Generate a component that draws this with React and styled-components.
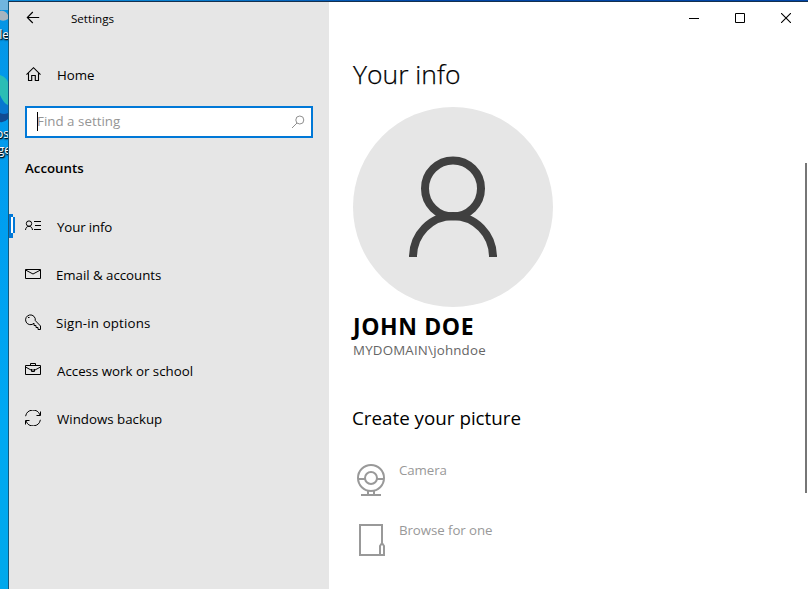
import React from "react";
import styled, { createGlobalStyle } from "styled-components";

const GlobalStyle = createGlobalStyle`
  * { box-sizing: border-box; }
  body { margin: 0; overflow: hidden; background: #fff; }
`;

const Screen = styled.div`
  width: 808px;
  height: 589px;
  display: flex;
  overflow: hidden;
  font-family: "Open Sans", "Noto Sans", sans-serif;
  font-size: 13.3px;
  color: #000;
`;

const Desktop = styled.div`
  width: 8px;
  height: 589px;
  flex: none;
  position: relative;
  overflow: hidden;
  background: linear-gradient(#0793e2 0, #0398ea 60px, #009ff0 230px, #00a8f2 420px, #00a8ec 589px);
`;

const DesktopArt = styled.svg`
  position: absolute;
  inset: 0;
`;

const DesktopLabel = styled.span`
  position: absolute;
  right: ${(p) => p.$right}px;
  top: ${(p) => p.$top}px;
  font-size: 12px;
  line-height: 16px;
  color: #fff;
  text-shadow: 1px 1px 1px #000, 0 1px 2px #000;
`;

const WindowTop = styled.div`
  display: flex;
  flex-direction: column;
  width: 800px;
  background: linear-gradient(90deg, #0a86d4 0, #0a80d0 170px, #0046a8 420px);
`;

const Window = styled.div`
  flex: 1;
  min-width: 0;
  display: flex;
  margin-top: 1px;
  border-left: 1px solid #17587c;
  border-top: 1px solid #14304f;
`;

const Sidebar = styled.aside`
  width: 320px;
  flex: none;
  background: #e6e6e6;
  display: flex;
  flex-direction: column;
`;

const TitleRow = styled.div`
  height: 33px;
  display: flex;
  align-items: center;
  padding-left: 16px;
  gap: 30px;
  font-size: 11.6px;
`;

const Text = styled.span`
  white-space: pre;
  letter-spacing: ${(p) => p.$track || 0}px;
  margin-left: ${(p) => p.$nudge || 0}px;
`;

const HomeRow = styled.div`
  height: 48px;
  margin-top: 16px;
  display: flex;
  align-items: center;
  padding-left: 16px;
  gap: 16px;
`;

const SearchBox = styled.div`
  margin: 7px 0 0 16px;
  width: 288px;
  height: 32px;
  border: 2px solid #0078d7;
  background: #fff;
  display: flex;
  align-items: center;
  color: #959595;
  padding: 0 6px 2px 10px;
`;

const Caret = styled.i`
  width: 1px;
  height: 19px;
  margin-right: -1px;
  background: #000;
`;

const Spacer = styled.div`
  flex: 1;
`;

const SectionTitle = styled.h2`
  margin: 18px 0 0 16px;
  font-size: 13.3px;
  line-height: 24px;
  font-weight: 600;
`;

const Nav = styled.nav`
  margin-top: 23px;
  display: flex;
  flex-direction: column;
`;

const NavItem = styled.div`
  height: 48px;
  position: relative;
  display: flex;
  align-items: center;
  padding-left: 16px;
  gap: 16px;
`;

const ActiveMark = styled.svg`
  position: absolute;
  left: 0;
  top: 11px;
`;

const Icon = styled.svg`
  flex: none;
  display: block;
  fill: none;
  stroke: ${(p) => p.$color || "#000"};
  stroke-width: ${(p) => p.$weight || 1};
  margin-top: ${(p) => p.$lift || 0}px;
`;

const Main = styled.main`
  flex: 1;
  min-width: 0;
  background: #fff;
  display: flex;
  flex-direction: column;
`;

const Controls = styled.div`
  height: 33px;
  display: flex;
  justify-content: flex-end;
  align-items: center;
  gap: 36px;
  padding: 0 17px 1px 0;
`;

const Body = styled.div`
  flex: 1;
  display: flex;
  justify-content: space-between;
  padding-right: 1px;
`;

const Content = styled.div`
  padding-left: 24px;
`;

const PageTitle = styled.h1`
  margin: 17px 0 0;
  font-size: 26.5px;
  font-weight: 300;
  line-height: 44px;
  -webkit-text-stroke: 0.25px #000;
`;

const Avatar = styled.div`
  width: 200px;
  height: 200px;
  margin-top: 11px;
  border-radius: 50%;
  background: #e6e6e6;
`;

const UserName = styled.div`
  margin-top: 3px;
  font-size: 23px;
  font-weight: 700;
  line-height: 32px;
`;

const Account = styled.div`
  line-height: 16px;
  color: #666;
`;

const SubTitle = styled.h2`
  margin: 44px 0 0;
  font-size: 18.8px;
  font-weight: 400;
  line-height: 32px;
`;

const Option = styled.div`
  height: 60px;
  display: flex;
  gap: 14px;
  padding-left: 4px;
  color: #999;
  line-height: 20px;
`;

const Options = styled.div`
  margin-top: 26px;
`;

const ScrollThumb = styled.div`
  width: 2px;
  height: 330px;
  margin-top: 128px;
  background: #767676;
`;

const icons = {
  info: (
    <>
      <circle cx="4" cy="5.6" r="2.7" />
      <path d="M.5 12C.8 9.6 2 8.3 4 8.3s3.2 1.3 3.5 3.7M9 3.5h7M10 7.5h6M9 11.5h7" />
    </>
  ),
  mail: <path d="M.5 3.5h15v9H.5zM.5 4l7.5 4 7.5-4" />,
  key: (
    <>
      <path d="M9 9.2A4.9 4.9 0 1 1 10.3 6.6L15.5 12v3.5H13v-2h-2v-2H9z" />
      <path d="M3 3.5h1.5" />
    </>
  ),
  work: <path d="M.5 3.5h15v9H.5zM5.5 3.5v-2h5v2M.5 5l5.5 3h4l5.5-3M6.5 7v2.5h3V7" />,
  sync: (
    <path d="M.6 6.2A7.5 7.5 0 0 1 15 5M15.5 1.5v4H11.5M15.4 9.8A7.5 7.5 0 0 1 1 11M.5 14.5v-4H4.5" />
  ),
};

const navItems = [
  { icon: "info", label: "Your info", track: -0.15 },
  { icon: "mail", label: "Email & accounts", nudge: -1, track: -0.04 },
  { icon: "key", label: "Sign-in options", nudge: -1, track: 0.17 },
  { icon: "work", label: "Access work or school" },
  { icon: "sync", label: "Windows backup" },
];

export default function App() {
  return (
    <>
      <GlobalStyle />
      <Screen>
        <Desktop>
          <DesktopArt width="8" height="589">
            <path d="M0 0h8v10H0z" fill="#71b5df" />
            <path d="M0 11q5-1 8 4v4q-4 3-8 1z" fill="#a6b4bf" />
            <path d="M0 75q6 2 8 7v26l-8-12z" fill="#2bbdb5" />
            <path d="M0 95q3 8 8 10v10q-4 6-8 7z" fill="#0878cf" />
            <path d="M0 113q4 2 8 0v6q-4 4-8 3z" fill="#114b92" />
          </DesktopArt>
          <DesktopLabel $top={27} $right={-1}>cle</DesktopLabel>
          <DesktopLabel $top={126} $right={-1}>os</DesktopLabel>
          <DesktopLabel $top={142} $right={-3}>ge</DesktopLabel>
        </Desktop>
        <WindowTop>
          <Window>
            <Sidebar>
              <TitleRow>
                <Icon width="16" height="16" viewBox="0 0 16 16" $weight={1.1} $lift={-1}>
                  <path d="M14.2 7.5H2.5M7.8 2L2.3 7.5l5.5 5.5" />
                </Icon>
                <Text>Settings</Text>
              </TitleRow>
              <HomeRow>
                <Icon width="16" height="16" viewBox="0 0 16 16" $weight={1.1} $lift={-2}>
                  <path d="M1.5 8.7L8.5 1.7l7 7M3.5 7.2v7.3h3.2V9.5h3.6v5h3.2V7.2" />
                </Icon>
                <Text>Home</Text>
              </HomeRow>
              <SearchBox>
                <Caret />
                <Text $track={0.03}>Find a setting</Text>
                <Spacer />
                <Icon width="14" height="14" viewBox="0 0 14 14" $color="#8f8f8f" $lift={2}>
                  <circle cx="8.8" cy="5" r="4" />
                  <path d="M6 8L1 13" />
                </Icon>
              </SearchBox>
              <SectionTitle>
                <Text>Accounts</Text>
              </SectionTitle>
              <Nav>
                {navItems.map((n, i) => (
                  <NavItem key={n.label}>
                    {i === 0 && (
                      <ActiveMark width="6" height="24">
                        <path d="M0 0h4v3h2v16H4v5H0z" fill="#0078d7" />
                        <path d="M2 3h2v16H2z" fill="#fff" />
                      </ActiveMark>
                    )}
                    <Icon width="16" height="16" viewBox="0 0 16 16" $lift={-2}>
                      {icons[n.icon]}
                    </Icon>
                    <Text $nudge={n.nudge} $track={n.track}>{n.label}</Text>
                  </NavItem>
                ))}
              </Nav>
            </Sidebar>
            <Main>
              <Controls>
                <Icon width="10" height="10" viewBox="0 0 10 10">
                  <path d="M0 5.5h10" />
                </Icon>
                <Icon width="10" height="10" viewBox="0 0 10 10">
                  <path d="M.5.5h9v9h-9z" />
                </Icon>
                <Icon width="10" height="10" viewBox="0 0 10 10" $weight={1.1}>
                  <path d="M0 0l10 10M10 0L0 10" />
                </Icon>
              </Controls>
              <Body>
                <Content>
                  <PageTitle>
                    <Text>Your info</Text>
                  </PageTitle>
                  <Avatar>
                    <Icon width="200" height="200" viewBox="0 0 200 200" $color="#404040" $weight={8}>
                      <circle cx="100" cy="81.5" r="28" />
                      <path d="M60 150a40 41 0 0 1 80 0" />
                    </Icon>
                  </Avatar>
                  <UserName>
                    <Text $track={0.6}>JOHN DOE</Text>
                  </UserName>
                  <Account>
                    <Text $track={0.2}>MYDOMAIN\johndoe</Text>
                  </Account>
                  <SubTitle>
                    <Text $nudge={-1}>Create your picture</Text>
                  </SubTitle>
                  <Options>
                    <Option>
                      <Icon width="28" height="36" viewBox="0 0 28 36" $color="#999" $weight={2}>
                        <circle cx="14" cy="18" r="13" />
                        <circle cx="14" cy="18" r="6" />
                        <path d="M1 19h7M20 19h7M11 30v4M17 30v4M4 35h20" />
                      </Icon>
                      <Text $track={-0.1}>Camera</Text>
                    </Option>
                    <Option>
                      <Icon width="28" height="36" viewBox="0 0 28 36" $color="#999" $weight={2}>
                        <path d="M25 23V5H3v30h24V26l-2-3-2 3v9" />
                      </Icon>
                      <Text $track={-0.08}>Browse for one</Text>
                    </Option>
                  </Options>
                </Content>
                <ScrollThumb />
              </Body>
            </Main>
          </Window>
        </WindowTop>
      </Screen>
    </>
  );
}
